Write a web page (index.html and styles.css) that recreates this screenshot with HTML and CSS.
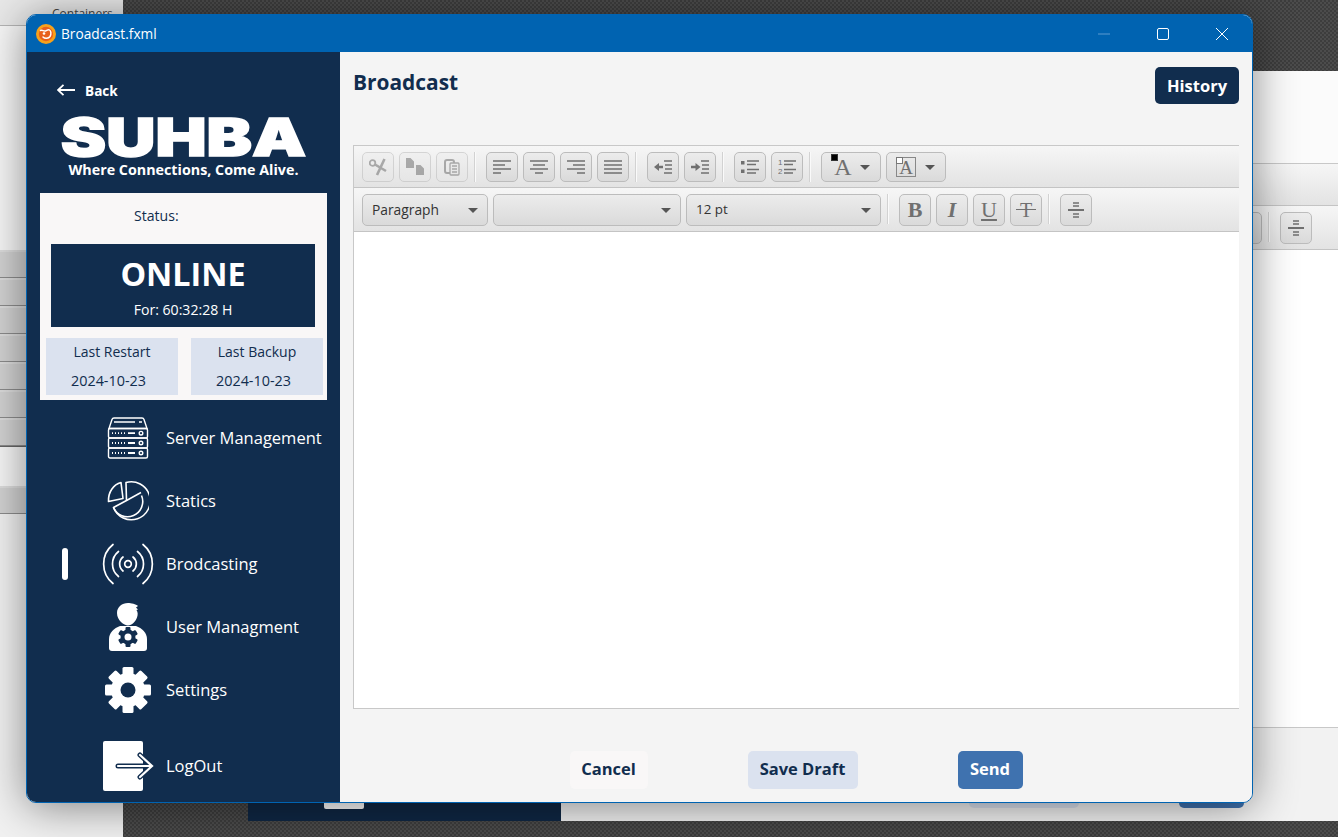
FILE: index.html
```html
<!DOCTYPE html>
<html lang="en">
<head>
<meta charset="utf-8">
<title>Broadcast.fxml</title>
<link rel="stylesheet" href="styles.css">
</head>
<body>
<div class="desktop">
  <aside class="bg-list">
    <div class="bg-list-head"><span class="bg-list-title">Containers</span></div>
    <div class="bg-gap-a"></div>
    <div class="bg-row"></div><div class="bg-row"></div><div class="bg-row"></div><div class="bg-row"></div><div class="bg-row"></div><div class="bg-row"></div><div class="bg-row"></div>
    <div class="bg-gap-b"></div>
    <div class="bg-row"></div>
  </aside>

  <div class="back-window">
    <div class="back-side"><span class="back-logout"></span></div>
    <div class="back-main">
      <div class="back-head"></div>
      <div class="editor-row row-one"></div>
      <div class="editor-row row-two">
        <span class="back-spacer"></span>
        <span class="tool-btn"></span>
        <span class="tool-sep"></span>
        <span class="tool-btn"><svg class="ico" viewBox="0 0 18 18"><path d="M6 2h6M6 5h6M6 13h6M6 16h6"/><path d="M1 9h16" stroke-width="2"/></svg></span>
      </div>
      <div class="back-page"></div>
      <div class="back-foot">
        <span class="back-btn back-light"></span>
        <span class="back-btn back-blue"></span>
      </div>
    </div>
  </div>

  <div class="window">
    <header class="titlebar">
      <svg class="app-icon" viewBox="0 0 20 20">
        <circle cx="10" cy="10" r="10" fill="#f7a11a"/>
        <circle cx="10" cy="10" r="7.2" fill="#e8601c"/>
        <path d="M4.500 6.500c2-1 3 1 5 .5s2.500-2 4-1c1.500 1 2 4 .5 6.500-1.500 2-5 2.500-7 .5" fill="none" stroke="#fff" stroke-width="1.500" stroke-linecap="round"/>
        <circle cx="8" cy="9.500" r="1.300" fill="#fff"/>
      </svg>
      <span class="title-text">Broadcast.fxml</span>
      <div class="win-controls">
        <span class="win-btn"><svg width="12" height="12" viewBox="0 0 12 12"><path d="M0 6h12" stroke="#5d9bd0" fill="none"/></svg></span>
        <span class="win-btn"><svg width="12" height="12" viewBox="0 0 12 12"><rect x=".5" y=".5" width="11" height="11" rx="1.500" fill="none" stroke="#fff"/></svg></span>
        <span class="win-btn"><svg width="12" height="12" viewBox="0 0 12 12"><path d="M0 0l12 12M12 0L0 12" stroke="#fff" fill="none"/></svg></span>
      </div>
    </header>

    <div class="win-body">
      <nav class="sidebar">
        <a class="back-link">
          <svg class="back-arrow" viewBox="0 0 18 12"><path d="M18 6H1M6.500 .8L1 6l5.500 5.200" fill="none" stroke="#fff" stroke-width="1.800"/></svg>
          <span>Back</span>
        </a>
        <div class="logo">SUHBA</div>
        <div class="tagline">Where Connections, Come Alive.</div>

        <section class="status-card">
          <div class="status-label">Status:</div>
          <div class="online-box">
            <div class="online-text">ONLINE</div>
            <div class="online-time">For: 60:32:28 H</div>
          </div>
          <div class="stats">
            <div class="stat"><span>Last Restart</span><span class="stat-date">2024-10-23</span></div>
            <div class="stat"><span>Last Backup</span><span class="stat-date">2024-10-23</span></div>
          </div>
        </section>

        <ul class="nav-list">
          <li class="nav-item">
            <span class="nav-mark"></span>
            <span class="nav-icon">
              <svg width="42" height="42" viewBox="0 0 42 42" fill="none" stroke="#fff" stroke-width="1.400">
                <path d="M2 11.500L5 2.500Q5.500 1 7 1H35q1.500 0 2 1.500L40 11.500Z"/>
                <path d="M7 5H28M32 5h3"/>
                <rect x="1.500" y="11.500" width="39" height="9.500" rx="1.500"/>
                <rect x="1.500" y="21" width="39" height="10" rx="1.500"/>
                <rect x="1.500" y="31" width="39" height="10" rx="1.500"/>
                <path d="M5 16.200h1M8 16.200h1M11 16.200h1M14 16.200h1M17 16.200h1M21 16.200h7M5 26h1M8 26h1M11 26h1M14 26h1M17 26h1M21 26h7M5 36h1M8 36h1M11 36h1M14 36h1M17 36h1M21 36h7" stroke-width="1.800"/>
                <circle cx="34" cy="16.200" r="1.800"/><circle cx="34" cy="26" r="1.800"/><circle cx="34" cy="36" r="1.800"/>
              </svg>
            </span>
            <span class="nav-label">Server Management</span>
          </li>
          <li class="nav-item">
            <span class="nav-mark"></span>
            <span class="nav-icon">
              <svg width="42" height="42" viewBox="0 0 42 42" fill="none" stroke="#fff" stroke-width="1.600" stroke-linejoin="round">
                <path d="M14 2.500L16 18.500 1.500 21.500C1 12 6.500 4.500 14 2.500Z"/>
                <path d="M19 2.500A19 19 0 1 1 6.500 27.500L19.500 20.500 19 2.500Z"/>
                <path d="M19.500 20.500L34 12.500"/>
                <path d="M6.500 27.500A15 15 0 0 0 34.500 15.500"/>
              </svg>
            </span>
            <span class="nav-label">Statics</span>
          </li>
          <li class="nav-item">
            <span class="nav-mark is-active"></span>
            <span class="nav-icon">
              <svg width="52" height="42" viewBox="-26 -21 52 42" fill="none" stroke="#fff" stroke-width="1.700" stroke-linecap="round">
                <circle r="3.300"/>
                <path d="M-5-7A9 9 0 0 0-5 7M5-7A9 9 0 0 1 5 7"/>
                <path d="M-9.500-12.500A16 16 0 0 0-9.500 12.500M9.500-12.500A16 16 0 0 1 9.500 12.500"/>
                <path d="M-15-19.500A25 25 0 0 0-15 19.500M15-19.500A25 25 0 0 1 15 19.500"/>
              </svg>
            </span>
            <span class="nav-label">Brodcasting</span>
          </li>
          <li class="nav-item">
            <span class="nav-mark"></span>
            <span class="nav-icon">
              <svg width="40" height="50" viewBox="0 0 40 50">
                <path d="M9 11C9 5 14 1 20 1c3 0 8 1 10 3l-2 1.500 2 2-1.500 .5c1.500 2 1.500 5 .5 7.500-1.500 4-5 8-9 8s-11-5-11-12.500Z" fill="#fff"/>
                <path d="M1 46V37c0-6 5-11 11-13H28c6 2 11 7 11 13v9q0 3-3 3H4q-3 0-3-3Z" fill="#fff"/>
                <g fill="#112d4e" transform="translate(20 35)">
                  <circle r="7.500"/>
                  <rect x="-2.500" y="-10" width="5" height="20" rx="1"/>
                  <rect x="-2.500" y="-10" width="5" height="20" rx="1" transform="rotate(60)"/>
                  <rect x="-2.500" y="-10" width="5" height="20" rx="1" transform="rotate(120)"/>
                </g>
                <circle cx="20" cy="35" r="3.500" fill="#fff"/>
              </svg>
            </span>
            <span class="nav-label">User Managment</span>
          </li>
          <li class="nav-item">
            <span class="nav-mark"></span>
            <span class="nav-icon">
              <svg width="48" height="48" viewBox="-24 -24 48 48">
                <g fill="#fff">
                  <circle r="17"/>
                  <rect x="-5.500" y="-23" width="11" height="46" rx="1.500"/>
                  <rect x="-5.500" y="-23" width="11" height="46" rx="1.500" transform="rotate(45)"/>
                  <rect x="-5.500" y="-23" width="11" height="46" rx="1.500" transform="rotate(90)"/>
                  <rect x="-5.500" y="-23" width="11" height="46" rx="1.500" transform="rotate(135)"/>
                </g>
                <circle r="7.500" fill="#112d4e"/>
              </svg>
            </span>
            <span class="nav-label">Settings</span>
          </li>
          <li class="nav-item nav-logout">
            <span class="nav-mark"></span>
            <span class="nav-icon">
              <svg class="logout-svg" width="52" height="50" viewBox="0 0 52 50">
                <rect width="40" height="50" rx="2" fill="#fff"/>
                <path d="M15 25H48M37 14l12 11-12 11" fill="none" stroke="#112d4e" stroke-width="5" stroke-linecap="round"/>
                <path d="M15 25H48M37 14l12 11-12 11" fill="none" stroke="#fff" stroke-width="2.200" stroke-linecap="round"/>
              </svg>
            </span>
            <span class="nav-label">LogOut</span>
          </li>
        </ul>
      </nav>

      <main class="content">
        <div class="content-head">
          <h1 class="page-title">Broadcast</h1>
          <button class="btn btn-navy" type="button">History</button>
        </div>

        <section class="editor">
          <div class="editor-row row-one">
            <span class="tool-btn is-off"><svg class="ico" viewBox="0 0 18 18"><circle cx="3.500" cy="5" r="2.800" stroke-width="1.800"/><path d="M6 6.500L17 13M15.500 1L8 17" stroke-width="2.600"/></svg></span>
            <span class="tool-btn is-off"><svg class="ico solid" viewBox="0 0 18 18"><path d="M0 0h4.500L8 3.500V10H0zM10 7h4.500L18 10.500V17h-8z"/></svg></span>
            <span class="tool-btn is-off"><svg class="ico" viewBox="0 0 18 18"><rect x="2" y="2" width="9" height="13" rx="2" stroke-width="2"/><rect x="7" y="5" width="9" height="12" rx="1" fill="#e6e6e6"/><path d="M9 8h5M9 11h5M9 14h5"/></svg></span>
            <span class="tool-sep"></span>
            <span class="tool-btn"><svg class="ico" viewBox="0 0 18 18"><path d="M0 3h18M0 7h12M0 11h18M0 15h8"/></svg></span>
            <span class="tool-btn"><svg class="ico" viewBox="0 0 18 18"><path d="M0 3h18M3 7h12M0 11h18M5 15h8"/></svg></span>
            <span class="tool-btn"><svg class="ico" viewBox="0 0 18 18"><path d="M0 3h18M6 7h12M0 11h18M10 15h8"/></svg></span>
            <span class="tool-btn"><svg class="ico" viewBox="0 0 18 18"><path d="M0 3h18M0 7h18M0 11h18M0 15h18"/></svg></span>
            <span class="tool-sep"></span>
            <span class="tool-btn"><svg class="ico" viewBox="0 0 18 18"><path d="M10 3h8M11 7h7M11 11h7M10 15h8"/><path class="fill" d="M0 9l5-4v8z"/><path d="M4 9h5" stroke-width="2.600"/></svg></span>
            <span class="tool-btn"><svg class="ico" viewBox="0 0 18 18"><path d="M10 3h8M11 7h7M11 11h7M10 15h8"/><path class="fill" d="M9.500 9l-5-4v8z"/><path d="M0 9h6" stroke-width="2.600"/></svg></span>
            <span class="tool-sep"></span>
            <span class="tool-btn"><svg class="ico" viewBox="0 0 18 18"><path class="fill" d="M0 3h3.500v3.500H0zM0 11.500h3.500V15H0z"/><path d="M6 3h12M6 6.500h9M6 11.500h12M6 15h9"/></svg></span>
            <span class="tool-btn"><svg class="ico" viewBox="0 0 18 18"><text class="ico-num" x="0" y="7">1</text><text class="ico-num" x="0" y="16">2</text><path d="M6 3h12M6 6.500h9M6 11.500h12M6 15h9"/></svg></span>
            <span class="tool-sep"></span>
            <span class="tool-btn tool-wide"><span class="color-a"><i class="swatch swatch-black"></i>A</span><i class="caret"></i></span>
            <span class="tool-btn tool-wide"><span class="color-a color-box"><i class="swatch swatch-white"></i>A</span><i class="caret"></i></span>
          </div>
          <div class="editor-row row-two">
            <span class="combo combo-a">Paragraph<i class="caret"></i></span>
            <span class="combo combo-b"><i class="caret"></i></span>
            <span class="combo combo-c">12 pt<i class="caret"></i></span>
            <span class="tool-sep"></span>
            <span class="tool-btn glyph glyph-b">B</span>
            <span class="tool-btn glyph glyph-i">I</span>
            <span class="tool-btn glyph glyph-u">U</span>
            <span class="tool-btn glyph glyph-t">T</span>
            <span class="tool-sep"></span>
            <span class="tool-btn"><svg class="ico" viewBox="0 0 18 18"><path d="M6 2h6M6 5h6M6 13h6M6 16h6"/><path d="M1 9h16" stroke-width="2"/></svg></span>
          </div>
          <div class="editor-page"></div>
        </section>

        <div class="actions">
          <button class="btn btn-white" type="button">Cancel</button>
          <button class="btn btn-light" type="button">Save Draft</button>
          <button class="btn btn-blue" type="button">Send</button>
        </div>
      </main>
    </div>
  </div>
</div>
</body>
</html>
```
FILE: styles.css
```css
* { box-sizing: border-box; }
html, body { margin: 0; padding: 0; }
body {
  width: 1338px;
  height: 837px;
  overflow: hidden;
  font-family: "Open Sans", "Noto Sans", sans-serif;
  color: #112d4e;
}

/* Desktop behind the window */
.desktop {
  position: relative;
  width: 1338px;
  height: 837px;
  overflow: hidden;
  background: repeating-conic-gradient(#4c4c4c 0 25%, #3d3d3d 0 50%) 0 0 / 4px 4px;
}
.bg-list {
  position: absolute;
  left: 0;
  top: 0;
  width: 123px;
  height: 837px;
  display: flex;
  flex-direction: column;
  background: #f1f1f1;
}
.bg-list-head {
  height: 26px;
  flex: none;
  background: #e8e8e8;
  border-bottom: 1px solid #b5b5b5;
  padding-left: 52px;
  line-height: 24px;
}
.bg-list-title { font-size: 12px; color: #444; }
.bg-gap-a { height: 224px; flex: none; background: #f6f6f6; }
.bg-row {
  height: 28px;
  flex: none;
  background: linear-gradient(#dcdcdc 0 2px, #d2d2d2 2px);
  border-bottom: 1px solid #8c8c8c;
}
.bg-gap-b { height: 40px; flex: none; background: #f6f6f6; border-top: 1px solid #666; }

.back-window {
  position: absolute;
  left: 248px;
  top: 71px;
  width: 1227px;
  height: 750px;
  display: flex;
  background: #f2f2f2;
}
.back-side {
  width: 313px;
  flex: none;
  background: #0f2744;
  padding: 688px 0 0 76px;
}
.back-logout {
  display: block;
  width: 40px;
  height: 50px;
  background: #fff;
  border-radius: 2px;
}
.back-main { flex: 1; padding-left: 13px; display: flex; flex-direction: column; }
.back-head { height: 93px; flex: none; border-bottom: 1px solid #c8c8c8; background: #fbfbfb; }
.back-spacer { width: 643px; flex: none; }
.back-page { flex: 1; background: #fff; border-bottom: 1px solid #c8c8c8; }
.back-foot { height: 93px; flex: none; padding: 42px 0 0 395px; display: flex; gap: 100px; }
.back-btn { height: 38px; border-radius: 5px; }
.back-light { width: 110px; background: #dbe2ef; }
.back-blue { width: 65px; background: #3f72af; }

/* Foreground window */
.window {
  position: absolute;
  left: 26px;
  top: 14px;
  width: 1227px;
  height: 789px;
  border: 1px solid #0063b1;
  border-radius: 10px;
  overflow: hidden;
  display: flex;
  flex-direction: column;
  background: #f4f4f4;
  box-shadow: 0 4px 44px rgba(0, 0, 0, .46);
}
.titlebar {
  height: 37px;
  flex: none;
  background: #0063b1;
  display: flex;
  align-items: center;
  padding-left: 9px;
  color: #fff;
}
.app-icon { width: 20px; height: 20px; flex: none; }
.title-text { margin-left: 5px; font-size: 13.700px; }
.win-controls { margin-left: auto; display: flex; padding-right: 1px; }
.win-btn { width: 59px; height: 37px; display: flex; align-items: center; justify-content: center; }
.win-body { flex: 1; display: flex; min-height: 0; }

/* Sidebar */
.sidebar {
  width: 313px;
  flex: none;
  background: #112d4e;
  color: #fff;
  display: flex;
  flex-direction: column;
  padding-top: 28px;
}
.back-link {
  display: flex;
  align-items: center;
  height: 20px;
  padding-left: 30px;
  font-size: 13.600px;
  font-weight: 700;
}
.back-arrow { width: 18px; height: 12px; margin-right: 10px; }
.logo {
  margin-top: 14px;
  height: 46px;
  text-align: center;
  font-family: Inter, "Liberation Sans", sans-serif;
  font-weight: 900;
  font-size: 52px;
  line-height: 48px;
  transform: scaleX(1.31);
  -webkit-text-stroke: 1.500px #fff;
}
.tagline {
  height: 20px;
  text-align: center;
  font-size: 14.300px;
  font-weight: 700;
  line-height: 20px;
  margin-bottom: 13px;
}
.status-card {
  margin-left: 13px;
  width: 287px;
  height: 207px;
  background: #f9f7f7;
  color: #112d4e;
  padding-top: 13px;
  display: flex;
  flex-direction: column;
}
.status-label { margin-left: 94px; font-size: 14.100px; line-height: 20px; }
.online-box {
  margin: 18px 0 0 11px;
  width: 264px;
  height: 83px;
  background: #112d4e;
  color: #fff;
  text-align: center;
  padding-top: 9px;
}
.online-text { font-size: 32.300px; font-weight: 700; line-height: 40px; }
.online-time { font-size: 14.100px; line-height: 20px; margin-top: 7px; }
.stats { display: flex; gap: 13px; margin: 11px 0 0 6px; }
.stat {
  width: 132px;
  height: 57px;
  background: #dbe2ef;
  font-size: 14px;
  line-height: 20px;
  display: flex;
  flex-direction: column;
  align-items: center;
  justify-content: space-between;
  padding: 4px 0;
}
.stat-date { padding-right: 7px; font-size: 14.400px; }

.nav-list { list-style: none; margin: 6px 0 0; padding: 0; }
.nav-item {
  height: 63px;
  display: flex;
  align-items: center;
  padding-left: 35px;
}
.nav-logout { margin-top: 13px; }
.nav-mark { width: 6px; height: 32px; border-radius: 3px; flex: none; }
.nav-mark.is-active { background: #fff; }
.nav-icon {
  width: 76px;
  margin-left: 22px;
  flex: none;
  display: flex;
  justify-content: center;
}
.nav-icon svg { display: block; flex: none; }
.nav-icon .logout-svg { margin-left: 2px; }
.nav-label { font-size: 16.500px; }

/* Content */
.content {
  flex: 1;
  min-width: 0;
  display: flex;
  flex-direction: column;
  padding: 0 13px;
  background: #f4f4f4;
}
.content-head {
  height: 93px;
  flex: none;
  display: flex;
  justify-content: space-between;
  align-items: flex-start;
  padding-top: 15px;
}
.page-title {
  margin: 0;
  font-size: 20.900px;
  font-weight: 700;
  line-height: 30px;
  color: #112d4e;
}
.btn {
  height: 38px;
  border: 0;
  border-radius: 5px;
  font: 700 16.500px "Open Sans", "Noto Sans", sans-serif;
  padding: 0;
  display: block;
}
.btn-navy { background: #112d4e; color: #fff; width: 84px; height: 37px; }
.btn-white { background: #f9f7f7; color: #112d4e; width: 78px; }
.btn-light { background: #dbe2ef; color: #112d4e; width: 110px; }
.btn-blue { background: #3f72af; color: #fff; width: 65px; }
.actions .btn { padding-bottom: 4px; }

/* Editor */
.editor {
  flex: 1;
  min-height: 0;
  display: flex;
  flex-direction: column;
  border-top: 1px solid #c8c8c8;
  border-bottom: 1px solid #c8c8c8;
  border-left: 1px solid #c8c8c8;
}
.editor-row {
  flex: none;
  display: flex;
  gap: 5px;
  padding: 6px 0 0 8px;
  background: linear-gradient(#f6f6f6, #e3e3e3);
  border-bottom: 1px solid #c4c4c4;
}
.row-one { height: 42px; }
.row-two { height: 44px; }
.editor-page { flex: 1; background: #fff; }
.tool-btn {
  width: 32px;
  height: 30px;
  flex: none;
  border: 1px solid #bcbcbc;
  border-radius: 5px;
  background: linear-gradient(#ececec, #dadada);
  display: flex;
  align-items: center;
  justify-content: center;
}
.row-two .tool-btn { height: 32px; }
.tool-btn.is-off { opacity: .55; background: linear-gradient(#eeeeee, #e6e6e6); }
.tool-wide { width: 60px; justify-content: flex-start; padding-left: 9px; position: relative; }
.tool-sep {
  flex: none;
  width: 2px;
  height: 30px;
  margin: 0 5px 0 1px;
  border-left: 1px solid #d2d2d2;
  border-right: 1px solid #fafafa;
}
.ico { width: 18px; height: 18px; fill: none; stroke: #707070; stroke-width: 1.300; }
.ico.solid { fill: #707070; stroke: none; }
.ico .fill { fill: #707070; stroke: none; }
.ico-num { font: 8px "Liberation Sans", sans-serif; fill: #707070; stroke: none; }
.caret {
  display: block;
  width: 0;
  height: 0;
  border: 5px solid transparent;
  border-top: 5px solid #555;
  border-bottom: 0;
}
.tool-wide .caret { position: absolute; right: 10px; top: 12px; }
.color-a {
  position: relative;
  width: 24px;
  height: 24px;
  font: 24px/25px "Liberation Serif", serif;
  color: #707070;
  text-align: center;
  display: block;
}
.color-box { border: 1px solid #888; width: 20px; height: 20px; font-size: 19px; line-height: 20px; }
.swatch { position: absolute; left: 0; top: -1px; width: 7px; height: 7px; border: 1px solid #333; }
.color-box .swatch { left: -1px; }
.swatch-black { background: #000; }
.swatch-white { background: #fff; border-color: #777; }
.combo {
  flex: none;
  height: 32px;
  border: 1px solid #bcbcbc;
  border-radius: 5px;
  background: linear-gradient(#ececec, #dadada);
  display: flex;
  align-items: center;
  justify-content: space-between;
  padding: 0 9px 2px;
  font-size: 13.400px;
  color: #333;
}
.combo .caret { margin-top: 2px; }
.combo-a { width: 126px; font-size: 13.800px; }
.combo-b { width: 188px; justify-content: flex-end; }
.combo-c { width: 195px; }
.glyph { font-family: "Liberation Serif", serif; font-size: 22px; color: #707070; }
.glyph-b { font-weight: 700; }
.glyph-i { font-style: italic; font-weight: 700; }
.glyph-u { text-decoration: underline; text-underline-offset: 2px; text-decoration-thickness: 2px; }
.glyph-t { position: relative; font-size: 20px; }
.glyph-t::after {
  content: "";
  position: absolute;
  left: 5px;
  right: 5px;
  top: 14px;
  height: 1px;
  background: #707070;
}

.actions {
  height: 93px;
  flex: none;
  display: flex;
  justify-content: center;
  gap: 100px;
  padding-top: 42px;
}
```
